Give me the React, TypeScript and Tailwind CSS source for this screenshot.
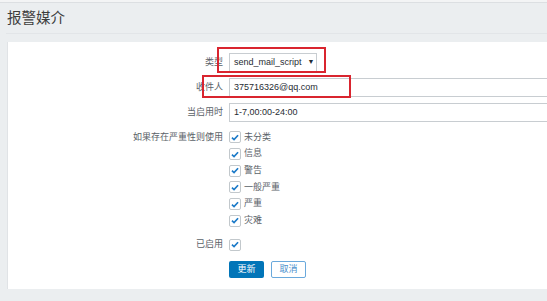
import React from 'react';

const FONT = '[font-family:"Liberation_Sans","Noto_Sans_CJK_SC",sans-serif]';

const severities = ['未分类', '信息', '警告', '一般严重', '严重', '灾难'];

function Check() {
  return (
    <span className="w-[12px] h-[12px] border border-[#c2c8cc] rounded-[2px] bg-white flex items-center justify-center shrink-0">
      <svg width="8" height="7" viewBox="0 0 9 8">
        <path d="M1 4.2 L3.4 6.4 L8 1.4" fill="none" stroke="#1b7ac8" strokeWidth="1.9" />
      </svg>
    </span>
  );
}

function Row({ label, children, h }: { label: string; children: React.ReactNode; h: string }) {
  return (
    <div className={`flex items-center ${h}`}>
      <div className="w-[216px] shrink-0 text-right text-[#5a6268] pr-[1px]">{label}</div>
      <div className="ml-[5px] flex items-center">{children}</div>
    </div>
  );
}

export default function App() {
  return (
    <div className={`w-[547px] h-[301px] bg-[#ebeef0] overflow-hidden relative text-[9px] ${FONT}`}>
      {/* 顶部细线 */}
      <div className="h-[3px] bg-[#f3f4f5] border-b border-[#dcdfe2]" />

      {/* 标题 */}
      <div className="ml-[6px] h-[31px] border-b border-[#e2e5e8] flex items-center">
        <h1 className="text-[14.5px] text-[#3d3d3d] leading-none pl-[1px] pt-[1px]">报警媒介</h1>
      </div>

      {/* 表单面板 */}
      <div className="ml-[7px] mt-[8px] w-[540px] bg-white border-l border-[#e0e3e6] pt-[11px] pb-[11px] overflow-hidden">
        <div className="flex flex-col">
          <Row label="类型" h="h-[19px]">
            <div className="h-[19px] w-[88px] shrink-0 border border-[#c8cdd1] flex items-center pl-[4px] text-[#1f2c33] bg-white whitespace-nowrap">
              send_mail_script
              <span className="ml-[6px] text-[7px]">▼</span>
            </div>
          </Row>
          <div className="h-[6px]" />
          <Row label="收件人" h="h-[19px]">
            <div className="h-[19px] w-[400px] shrink-0 border border-[#c8cdd1] flex items-center pl-[4px] text-[#1f2c33]">
              375716326@qq.com
            </div>
          </Row>
          <div className="h-[6px]" />
          <Row label="当启用时" h="h-[19px]">
            <div className="h-[19px] w-[400px] shrink-0 border border-[#c8cdd1] flex items-center pl-[4px] text-[#1f2c33]">
              1-7,00:00-24:00
            </div>
          </Row>

          <div className="flex mt-[7px]">
            <div className="w-[216px] shrink-0 text-right text-[#5a6268] h-[17px] leading-[17px] pr-[1px]">如果存在严重性则使用</div>
            <div className="ml-[5px] flex flex-col">
              {severities.map(s => (
                <div key={s} className="h-[16.7px] flex items-center gap-[3px] text-[#5a6268]">
                  <Check />
                  <span>{s}</span>
                </div>
              ))}
            </div>
          </div>

          <div className="h-[7px]" />
          <Row label="已启用" h="h-[17px]">
            <Check />
          </Row>

          <div className="flex mt-[8px] ml-[221px] gap-[7px]">
            <button className="h-[17px] w-[35px] rounded-[2px] bg-[#0275b8] text-white text-[9px] leading-none">
              更新
            </button>
            <button className="h-[17px] w-[35px] rounded-[2px] bg-white border border-[#6aa9dc] text-[#4a8fcc] text-[9px] leading-none">
              取消
            </button>
          </div>
        </div>
      </div>

      {/* 红色标注框 */}
      <div className="absolute left-[217px] top-[47px] w-[109px] h-[26px] border-2 border-[#d9252f]" />
      <div className="absolute left-[202px] top-[75px] w-[149px] h-[23px] border-2 border-[#d9252f]" />
    </div>
  );
}
